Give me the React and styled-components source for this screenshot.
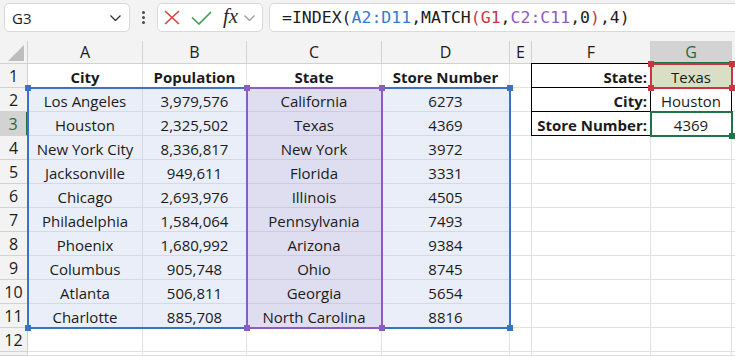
import React from 'react'
import styled, { createGlobalStyle } from 'styled-components'

const color = {
  chrome: '#f3f3f3',
  field: '#d9d9d9',
  grid: '#e1e1e1',
  headLine: '#d2d2d2',
  ink: '#1b1b1b',
  blue: '#3b72c5',
  blueText: '#2f7bcf',
  blueFill: '#e9eef8',
  blueLine: '#d3d9e5',
  purple: '#8c5cc1',
  purpleFill: '#dedef0',
  purpleLine: '#cbcbe1',
  red: '#c8363f',
  olive: '#d9dfc4',
  green: '#217346',
  greenText: '#1f6b42',
  headSel: '#d3d3d3',
}

// H is only a sliver at the right edge, so its letter is not shown
const COLS = ['A', 'B', 'C', 'D', 'E', 'F', 'G', '']
const WIDTHS = '28px 115px 104px 135px 128px 22px 119px 81px 1fr'
const HEIGHTS = '23px repeat(12, 24px) 1fr'

const GlobalStyle = createGlobalStyle`
  html, body { margin: 0; padding: 0; background: ${color.chrome}; }
  body { overflow: hidden; }
`

const Page = styled.div`
  width: 735px;
  height: 356px;
  overflow: hidden;
  display: flex;
  flex-direction: column;
  background: ${color.chrome};
  font-family: 'Open Sans', 'Liberation Sans', sans-serif;
  color: ${color.ink};
`

/* ---------- formula bar ---------- */

const Toolbar = styled.div`
  height: 41px;
  flex: none;
  display: flex;
  align-items: flex-start;
  padding: 3px 0 0 4px;
  box-sizing: border-box;
`

const Field = styled.div`
  height: 29px;
  box-sizing: border-box;
  background: #fff;
  border: 1px solid ${color.field};
  border-radius: 5px;
  display: flex;
  align-items: center;
`

const NameBox = styled(Field)`
  width: 126px;
  padding: 0 8px 0 7px;
  justify-content: space-between;
  font-size: 15px;
`

const Grip = styled.div`
  width: 27px;
  height: 29px;
  display: flex;
  flex-direction: column;
  align-items: center;
  justify-content: center;
  gap: 2px;
`

const Dot = styled.span`
  width: 3px;
  height: 3px;
  border-radius: 50%;
  background: #4a4a4a;
`

const EditBox = styled(Field)`
  width: 106px;
  padding-left: 6px;
  gap: 11px;
`

const Fx = styled.span`
  font-family: 'Liberation Serif', 'DejaVu Serif', serif;
  font-style: italic;
  font-size: 21px;
  line-height: 1;
  color: #2b2b2b;
  margin-top: -3px;
`

const DropTip = styled.span`
  display: flex;
  margin-left: -5px;
`

const FormulaBox = styled(Field)`
  flex: 1;
  margin: 0 -20px 0 6px;
  padding-left: 12px;
  font-family: 'DejaVu Sans Mono', 'Liberation Mono', monospace;
  font-size: 16.5px;
  white-space: pre;
`

const Ref = styled.span`
  color: ${p => p.$color};
`

/* ---------- sheet ---------- */

const Sheet = styled.div`
  flex: 1;
  display: grid;
  grid-template: 1fr / 1fr;
  min-height: 0;
`

const Layer = styled.div`
  grid-area: 1 / 1;
  display: grid;
  grid-template-columns: ${WIDTHS};
  grid-template-rows: ${HEIGHTS};
  min-height: 0;
`

const Cells = styled(Layer)`
  background: #fff;
`

const Marks = styled(Layer)`
  pointer-events: none;
`

const Head = styled.div`
  box-sizing: border-box;
  display: flex;
  align-items: center;
  justify-content: center;
  font-size: 16px;
  background: ${p => (p.$active ? color.headSel : color.chrome)};
  color: ${p => (p.$active ? color.greenText : color.ink)};
  border-right: 1px solid ${color.headLine};
  border-bottom: 1px solid ${color.headLine};
`

const Corner = styled(Head)`
  position: relative;
  &::after {
    content: '';
    position: absolute;
    right: 3px;
    bottom: 2px;
    width: 16px;
    height: 16px;
    background: #bdbdbd;
    clip-path: polygon(100% 0, 100% 100%, 0 100%);
  }
`

const ColHead = styled(Head)`
  ${p => p.$active && `border-bottom: 2px solid ${color.green};`}
`

const RowHead = styled(Head)`
  ${p => p.$active && `border-right: 2px solid ${color.green};`}
`

const fills = {
  blue: [color.blueFill, color.blueLine],
  purple: [color.purpleFill, color.purpleLine],
  olive: [color.olive, color.grid],
}

const Cell = styled.div`
  box-sizing: border-box;
  display: flex;
  align-items: center;
  justify-content: ${p => (p.$right ? 'flex-end' : 'center')};
  padding: 2px 3px 0;
  font-size: 15px;
  font-weight: ${p => (p.$bold ? 700 : 400)};
  white-space: nowrap;
  overflow: hidden;
  background: ${p => (p.$fill ? fills[p.$fill][0] : '#fff')};
  border-right: 1px solid ${p => (p.$boxed ? '#000' : p.$fill ? fills[p.$fill][1] : color.grid)};
  border-bottom: 1px solid ${p => (p.$boxed ? '#000' : p.$fill ? fills[p.$fill][1] : color.grid)};
`

const Outline = styled.div`
  grid-area: ${p => p.$area};
  margin: -1px 0 0 -1px;
  border-top: 1px solid #000;
  border-left: 1px solid #000;
`

const Range = styled.div`
  grid-area: ${p => p.$area};
  margin: -1px;
  border: 2px solid ${p => p.$color};
  position: relative;
`

const Handle = styled.span`
  position: absolute;
  width: 6px;
  height: 6px;
  background: ${p => p.$color};
  ${p => (p.$top ? 'top: -4px;' : 'bottom: -4px;')}
  ${p => (p.$left ? 'left: -4px;' : 'right: -4px;')}
`

/* ---------- data ---------- */

const stores = [
  ['Los Angeles', '3,979,576', 'California', '6273'],
  ['Houston', '2,325,502', 'Texas', '4369'],
  ['New York City', '8,336,817', 'New York', '3972'],
  ['Jacksonville', '949,611', 'Florida', '3331'],
  ['Chicago', '2,693,976', 'Illinois', '4505'],
  ['Philadelphia', '1,584,064', 'Pennsylvania', '7493'],
  ['Phoenix', '1,680,992', 'Arizona', '9384'],
  ['Columbus', '905,748', 'Ohio', '8745'],
  ['Atlanta', '506,811', 'Georgia', '5654'],
  ['Charlotte', '885,708', 'North Carolina', '8816'],
]

const lookup = [
  ['State:', 'Texas'],
  ['City:', 'Houston'],
  ['Store Number:', '4369'],
]

const table = [['City', 'Population', 'State', 'Store Number'], ...stores, ['', '', '', '']]

const RangeBox = ({ area, tint, corners = 'all' }) => (
  <Range $area={area} $color={tint}>
    {corners === 'all' && (
      <>
        <Handle $top $left $color={tint} />
        <Handle $top $color={tint} />
        <Handle $left $color={tint} />
      </>
    )}
    <Handle $color={tint} />
  </Range>
)

const Chevron = ({ stroke }) => (
  <svg width="11" height="6" viewBox="0 0 11 6">
    <path d="M0.5 0.5 L5.5 5.5 L10.5 0.5" fill="none" stroke={stroke} strokeWidth="1.3" />
  </svg>
)

export default function App() {
  return (
    <>
      <GlobalStyle />
      <Page>
        <Toolbar>
          <NameBox>
            <span>G3</span>
            <Chevron stroke="#333" />
          </NameBox>
          <Grip>
            <Dot />
            <Dot />
            <Dot />
          </Grip>
          <EditBox>
            <svg width="16" height="15" viewBox="0 0 16 15">
              <path d="M1 1 L15 14 M15 1 L1 14" stroke="#e0413b" strokeWidth="1.6" fill="none" />
            </svg>
            <svg width="21" height="14" viewBox="0 0 21 14">
              <path d="M1 6.5 L8 13 L20 1" stroke="#3a9d56" strokeWidth="1.6" fill="none" />
            </svg>
            <Fx>fx</Fx>
            <DropTip>
              <Chevron stroke="#9b9b9b" />
            </DropTip>
          </EditBox>
          <FormulaBox>
            =INDEX(<Ref $color={color.blueText}>A2:D11</Ref>,MATCH<Ref $color={color.red}>(G1</Ref>,
            <Ref $color={color.purple}>C2:C11</Ref>,0<Ref $color={color.red}>)</Ref>,4)
          </FormulaBox>
        </Toolbar>
        <Sheet>
          <Cells>
            <Corner />
            {COLS.map((c, k) => (
              <ColHead key={k} $active={c === 'G'}>
                {c}
              </ColHead>
            ))}
            {table.map((row, i) => (
              <React.Fragment key={i}>
                <RowHead $active={i === 2}>{i + 1}</RowHead>
                {row.map((text, j) => (
                  <Cell
                    key={j}
                    $bold={i === 0}
                    $fill={i > 0 && i < 11 ? (j === 2 ? 'purple' : 'blue') : undefined}
                  >
                    {text}
                  </Cell>
                ))}
                <Cell />
                <Cell $right $bold $boxed={i < 3}>
                  {lookup[i] ? lookup[i][0] : ''}
                </Cell>
                <Cell $boxed={i < 3} $fill={i === 0 ? 'olive' : undefined}>
                  {lookup[i] ? lookup[i][1] : ''}
                </Cell>
                <Cell />
              </React.Fragment>
            ))}
            <Head />
            {COLS.map((c, k) => (
              <Cell key={'f' + k} />
            ))}
          </Cells>
          <Marks>
            <Outline $area="2 / 7 / 5 / 9" />
            <RangeBox area="3 / 2 / 13 / 6" tint={color.blue} />
            <RangeBox area="3 / 4 / 13 / 5" tint={color.purple} />
            <RangeBox area="2 / 8 / 3 / 9" tint={color.red} />
            <RangeBox area="4 / 8 / 5 / 9" tint={color.green} corners="one" />
          </Marks>
        </Sheet>
      </Page>
    </>
  )
}
